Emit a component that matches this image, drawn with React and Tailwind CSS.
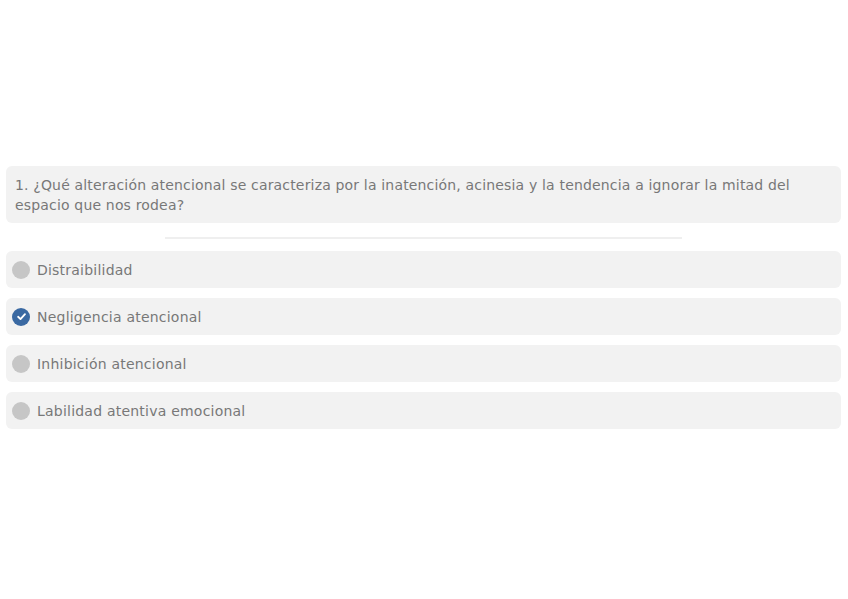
import React from "react";

const options = [
  { label: "Distraibilidad", checked: false },
  { label: "Negligencia atencional", checked: true },
  { label: "Inhibición atencional", checked: false },
  { label: "Labilidad atentiva emocional", checked: false },
];

export default function App() {
  return (
    <div
      className="w-[848px] h-[599px] bg-white pt-[166px] px-[6px] text-[#787878]"
      style={{ fontFamily: '"DejaVu Sans", "Noto Sans", sans-serif' }}
    >
      <div className="w-[835px] rounded-[6px] bg-[#f2f2f2] pl-[9px] pr-3 pt-[9px] pb-[8px] text-[14px] leading-[20px] font-normal tracking-[0.17px]">
        1. ¿Qué alteración atencional se caracteriza por la inatención, acinesia y la tendencia a ignorar la mitad del espacio que nos rodea?
      </div>
      <div className="w-[517px] h-[2px] bg-[#efefef] ml-[159px] mt-[14px] mb-[12px]" />
      <div className="flex flex-col gap-[10px] w-[835px]">
        {options.map((o) => (
          <div
            key={o.label}
            className="h-[37px] rounded-[6px] bg-[#f2f2f2] flex items-center pl-[6px] gap-[7px] text-[14px] font-normal tracking-[0.22px]"
          >
            {o.checked ? (
              <span className="w-[18px] h-[18px] rounded-full bg-[#3a69a2] flex items-center justify-center">
                <svg width="11" height="11" viewBox="0 0 12 12" fill="none">
                  <path d="M2.3 6.3 L4.9 8.8 L9.8 3.4" stroke="white" strokeWidth="2" strokeLinecap="round" strokeLinejoin="round" />
                </svg>
              </span>
            ) : (
              <span className="w-[18px] h-[18px] rounded-full bg-[#c6c6c6]" />
            )}
            <span className="pt-[2px]">{o.label}</span>
          </div>
        ))}
      </div>
    </div>
  );
}
